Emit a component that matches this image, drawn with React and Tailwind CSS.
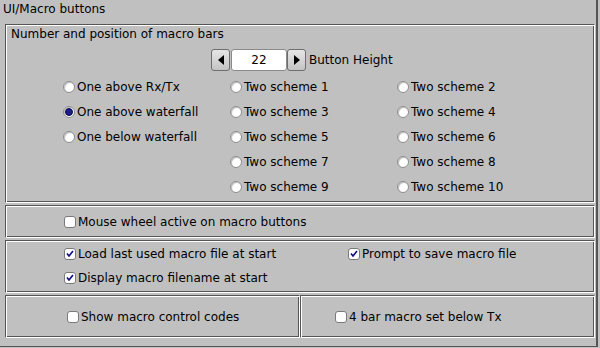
import React from 'react';

const engraved =
  'border border-t-[#555555] border-l-[#555555] border-b-white border-r-white shadow-[inset_1px_1px_0_#ffffff,inset_-1px_-1px_0_#555555]';

function Radio({ label, checked }) {
  return (
    <div className="flex items-center h-[25px]">
      <span className="w-[12px] h-[12px] rounded-full bg-white border border-[#8c8c8c] flex items-center justify-center shadow-[inset_1px_1px_1px_#bdbdbd]">
        {checked && <span className="w-[8px] h-[8px] rounded-full bg-[#1c1c8c] border border-[#0a0a50]" />}
      </span>
      <span className="ml-[2px]">{label}</span>
    </div>
  );
}

function Check({ label, checked }) {
  return (
    <div className="flex items-center h-[20px]">
      <span className="w-[12px] h-[12px] rounded-[3px] bg-white border border-[#7a7a7a] flex items-center justify-center">
        {checked && (
          <svg width="8" height="8" viewBox="0 0 8 8">
            <path d="M1 3.5 L3 6 L7 1" fill="none" stroke="#0c0c80" strokeWidth="1.6" />
          </svg>
        )}
      </span>
      <span className="ml-[2px]">{label}</span>
    </div>
  );
}

function ArrowButton({ dir }) {
  return (
    <div className="w-[19px] h-[22px] rounded-[3px] border border-[#6e6e6e] bg-gradient-to-b from-[#e6e6e6] to-[#c4c4c4] flex items-center justify-center">
      <svg width="6" height="10" viewBox="0 0 6 10">
        {dir === 'left' ? <path d="M6 0 L0 5 L6 10 Z" fill="#000" /> : <path d="M0 0 L6 5 L0 10 Z" fill="#000" />}
      </svg>
    </div>
  );
}

export default function App() {
  const rows = [
    ['One above Rx/Tx', 'Two scheme 1', 'Two scheme 2'],
    ['One above waterfall', 'Two scheme 3', 'Two scheme 4'],
    ['One below waterfall', 'Two scheme 5', 'Two scheme 6'],
    [null, 'Two scheme 7', 'Two scheme 8'],
    [null, 'Two scheme 9', 'Two scheme 10'],
  ];

  return (
    <div className="w-[600px] h-[348px] bg-[#c0c0c0] text-black text-[12px] leading-[14px] font-['DejaVu_Sans',sans-serif]">
      <div className="w-[598px] h-[347px] border-r-2 border-b border-[#555555] flex flex-col">
        <div className="pl-[3px] pt-[2px] h-[24px]">UI/Macro buttons</div>

        <div className="ml-[5px] w-[590px] flex flex-col gap-[2px]">
          {/* macro bars */}
          <div className={`${engraved} h-[179px] pl-[5px] pt-[2px]`}>
            <div>Number and position of macro bars</div>
            <div className="flex items-center mt-[8px] ml-[200px]">
              <ArrowButton dir="left" />
              <div className="ml-[1px] w-[56px] h-[22px] rounded-[3px] bg-white border border-[#8a8a8a] flex items-center justify-center">
                22
              </div>
              <ArrowButton dir="right" />
              <span className="ml-[3px]">Button Height</span>
            </div>
            <div className="mt-[3px] ml-[52px] grid grid-cols-[167px_167px_167px]">
              {rows.map((r, i) =>
                r.map((label, j) =>
                  label ? <Radio key={`${i}-${j}`} label={label} checked={label === 'One above waterfall'} /> : <div key={`${i}-${j}`} className="h-[25px]" />
                )
              )}
            </div>
          </div>

          {/* mouse wheel */}
          <div className={`${engraved} h-[33px] flex items-center pl-[58px]`}>
            <Check label="Mouse wheel active on macro buttons" />
          </div>

          {/* load / prompt */}
          <div className={`${engraved} h-[53px] pt-[3px] pl-[58px] grid grid-cols-[284px_1fr]`}>
            <Check label="Load last used macro file at start" checked />
            <Check label="Prompt to save macro file" checked />
            <Check label="Display macro filename at start" checked />
          </div>

          {/* bottom */}
          <div className="flex">
            <div className={`${engraved} w-[295px] h-[43px] flex items-center pl-[61px]`}>
              <Check label="Show macro control codes" />
            </div>
            <div className={`${engraved} w-[295px] h-[43px] flex items-center pl-[34px]`}>
              <Check label="4 bar macro set below Tx" />
            </div>
          </div>
        </div>
      </div>
    </div>
  );
}
